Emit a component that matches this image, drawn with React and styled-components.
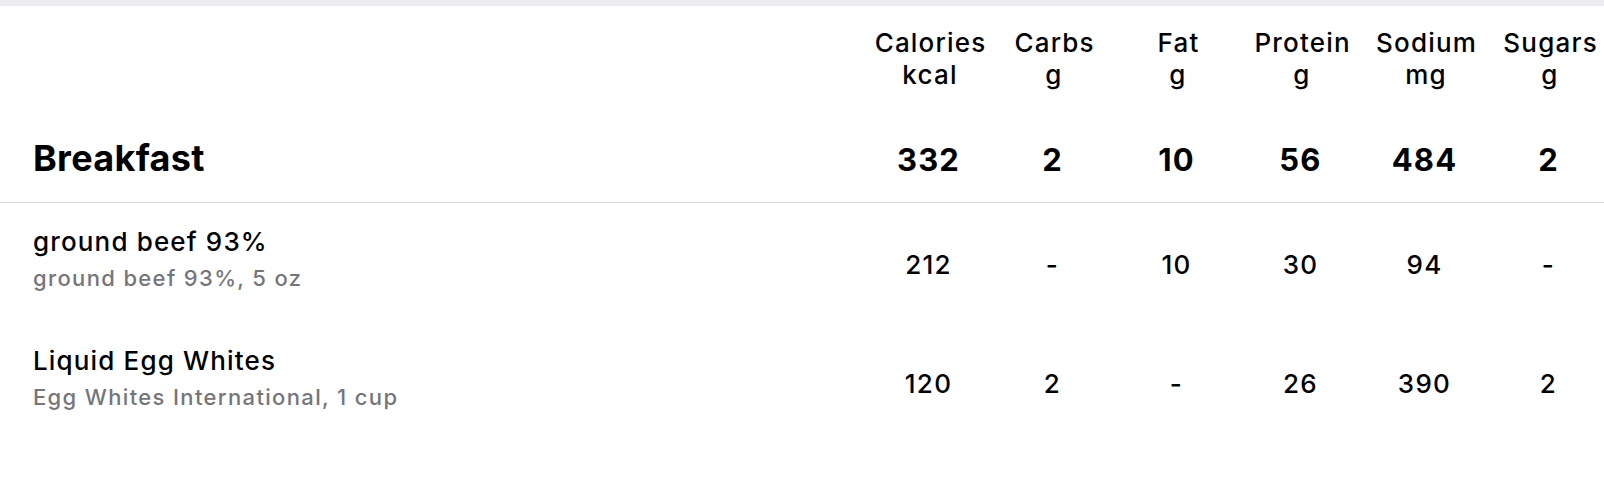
import React from "react";
import styled, { createGlobalStyle } from "styled-components";

const GlobalStyle = createGlobalStyle`
  html, body {
    margin: 0;
    padding: 0;
    background: #ffffff;
    overflow: hidden;
  }
  body {
    font-family: Inter, "Noto Sans", "Liberation Sans", sans-serif;
    color: #000;
    -webkit-font-smoothing: antialiased;
  }
`;

const Page = styled.div`
  width: calc(100% + 8px);
  min-height: 477px;
  background: #fff;
`;

const TopBand = styled.div`
  height: 6px;
  background: #ebebf0;
`;

const Row = styled.div`
  display: grid;
  grid-template-columns: 1fr repeat(6, 124px);
  align-items: ${(p) => p.$align || "center"};
  padding-left: 33px;
  box-sizing: border-box;
`;

const HeaderRow = styled(Row)`
  padding-top: 21px;
`;

const SectionRow = styled(Row)`
  padding-top: 45px;
  padding-bottom: 20px;
  border-bottom: 1px solid #d9d9dc;
  align-items: baseline;
`;

const ItemList = styled.div`
  padding-top: 2px;
`;

const ItemRow = styled(Row)`
  height: 119px;
`;

const HeadCell = styled.div`
  text-align: center;
  font-size: 26px;
  line-height: 32px;
  font-weight: 500;
  letter-spacing: 1.2px;
  text-indent: 1.2px;
  white-space: nowrap;
`;

const SectionTitle = styled.div`
  font-size: 36px;
  line-height: 44px;
  font-weight: 700;
  letter-spacing: 0.3px;
`;

const SectionValue = styled.div`
  text-align: center;
  font-size: 31px;
  line-height: 44px;
  font-weight: 700;
  letter-spacing: 1.2px;
  padding-right: 3px;
`;

const NameCell = styled.div`
  display: flex;
  flex-direction: column;
  padding-bottom: 10px;
`;

const ItemName = styled.div`
  font-size: 26px;
  line-height: 32px;
  font-weight: 500;
  letter-spacing: 1.15px;
`;

const ItemSub = styled.div`
  font-size: 22px;
  line-height: 30px;
  font-weight: 500;
  color: #75757a;
  letter-spacing: 1.35px;
  margin-top: 5px;
`;

const ValueCell = styled.div`
  text-align: center;
  font-size: 26px;
  line-height: 32px;
  font-weight: 500;
  letter-spacing: 1.3px;
  padding-right: 3px;
`;

const columns = [
  ["Calories", "kcal"],
  ["Carbs", "g"],
  ["Fat", "g"],
  ["Protein", "g"],
  ["Sodium", "mg"],
  ["Sugars", "g"],
];

const section = { title: "Breakfast", values: ["332", "2", "10", "56", "484", "2"] };

const items = [
  {
    name: "ground beef 93%",
    sub: "ground beef 93%, 5 oz",
    values: ["212", "-", "10", "30", "94", "-"],
  },
  {
    name: "Liquid Egg Whites",
    sub: "Egg Whites International, 1 cup",
    values: ["120", "2", "-", "26", "390", "2"],
  },
];

export default function App() {
  return (
    <Page>
      <GlobalStyle />
      <TopBand />
      <HeaderRow $align="start">
        <div />
        {columns.map(([label, unit]) => (
          <HeadCell key={label}>
            {label}
            <br />
            {unit}
          </HeadCell>
        ))}
      </HeaderRow>
      <SectionRow>
        <SectionTitle>{section.title}</SectionTitle>
        {section.values.map((v, i) => (
          <SectionValue key={i}>{v}</SectionValue>
        ))}
      </SectionRow>
      <ItemList>
        {items.map((item) => (
          <ItemRow key={item.name}>
            <NameCell>
              <ItemName>{item.name}</ItemName>
              <ItemSub>{item.sub}</ItemSub>
            </NameCell>
            {item.values.map((v, i) => (
              <ValueCell key={i}>{v}</ValueCell>
            ))}
          </ItemRow>
        ))}
      </ItemList>
    </Page>
  );
}
